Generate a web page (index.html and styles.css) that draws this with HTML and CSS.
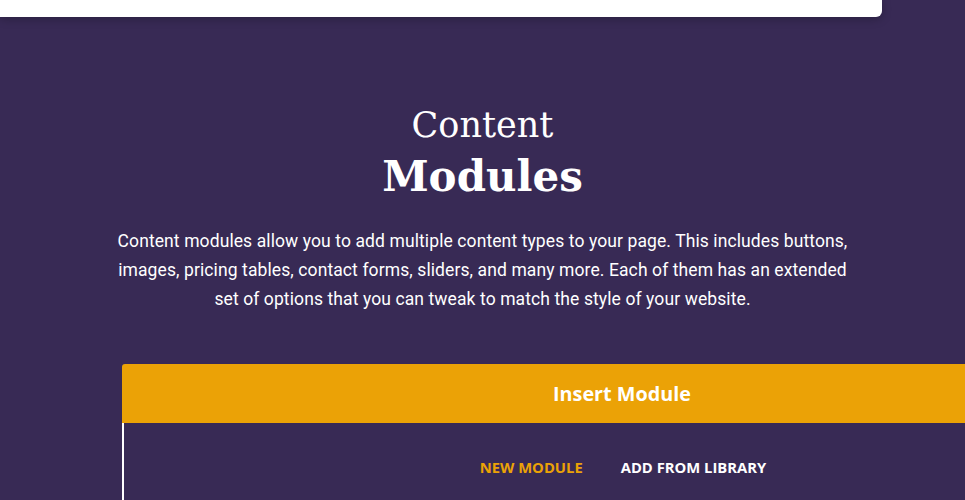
FILE: index.html
```html
<!DOCTYPE html>
<html lang="en">
<head>
  <meta charset="UTF-8">
  <meta name="viewport" content="width=device-width, initial-scale=1.0">
  <title>Content Modules</title>
  <link rel="stylesheet" href="styles.css">
</head>
<body>

<!-- bottom of the previous section's card -->
<div class="top-card"></div>

<section class="modules">
  <h2 class="modules-title">
    <span class="title-light">Content</span>
    <span class="title-bold">Modules</span>
  </h2>
  <p class="modules-text">Content modules allow you to add multiple content types to your page. This includes buttons, images, pricing tables, contact forms, sliders, and many more. Each of them has an extended set of options that you can tweak to match the style of your website.</p>

  <div class="insert-panel">
    <div class="insert-header">Insert Module</div>
    <div class="insert-body">
      <div class="tabs">
        <a href="#" class="tab active">New Module</a>
        <a href="#" class="tab">Add From Library</a>
      </div>
    </div>
  </div>
</section>

</body>
</html>
```

FILE: styles.css
```css
body {
  margin: 0;
  background-color: #382a55;
  color: #fff;
  font-family: Roboto, Arial, sans-serif;
  overflow: hidden;
  height: 500px;
}

.top-card {
  width: 882px;
  height: 17px;
  background-color: #fff;
  border-radius: 0 0 6px 0;
  box-shadow: 0 2px 10px rgba(0, 0, 0, 0.25);
}

.modules {
  display: flex;
  flex-direction: column;
  align-items: center;
  padding-top: 86px;
  height: 397px;
  overflow: hidden;
}

.modules-title {
  margin: 0;
  font-family: "DejaVu Serif", "Liberation Serif", serif;
  font-weight: normal;
  text-align: center;
  display: flex;
  flex-direction: column;
  align-items: center;
}

.title-light {
  font-size: 35px;
  line-height: 44px;
}

.title-bold {
  font-size: 42px;
  line-height: 60px;
  font-weight: bold;
}

.modules-text {
  width: 748px;
  margin: 20px 0 0 0;
  font-size: 17.5px;
  letter-spacing: 0.1px;
  line-height: 29px;
  text-align: center;
}

.insert-panel {
  align-self: flex-start;
  margin: 50px 0 0 122px;
  width: 1000px;
  flex-shrink: 0;
}

.insert-header {
  background-color: #eba206;
  border-radius: 3px 0 0 0;
  height: 59px;
  line-height: 59px;
  text-align: center;
  font-family: "Open Sans", Arial, sans-serif;
  font-weight: bold;
  font-size: 19.8px;
}

.insert-body {
  border-left: 2px solid #fff;
  height: 120px;
}

.tabs {
  display: flex;
  justify-content: center;
  gap: 38px;
  padding-top: 34px;
}

.tab {
  font-family: "Open Sans", Arial, sans-serif;
  font-weight: bold;
  font-size: 14.8px;
  text-transform: uppercase;
  color: #fff;
  text-decoration: none;
}

.tab.active {
  color: #eba206;
}
```
